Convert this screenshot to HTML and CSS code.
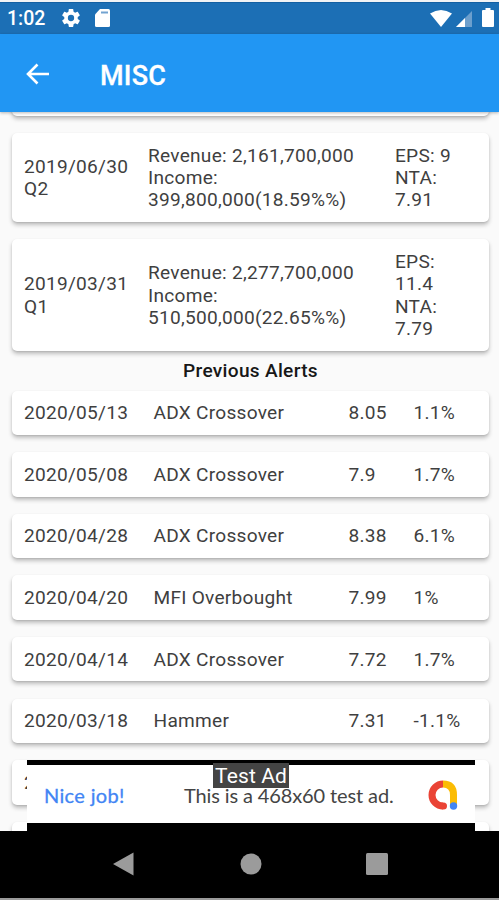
FILE: index.html
```html
<!DOCTYPE html>
<html lang="en">
<head>
<meta charset="utf-8">
<title>MISC</title>
<link rel="stylesheet" href="styles.css">
</head>
<body>
<div class="phone">
  <div class="status">
    <span class="time">1:02</span>
    <svg class="gear" viewBox="2 2 20 20"><path d="M19.43 12.98c.04-.32.07-.64.07-.98s-.03-.66-.07-.98l2.11-1.65c.19-.15.24-.42.12-.64l-2-3.46c-.12-.22-.39-.3-.61-.22l-2.49 1c-.52-.4-1.08-.73-1.69-.98l-.38-2.65C14.46 2.18 14.25 2 14 2h-4c-.25 0-.46.18-.49.42l-.38 2.65c-.61.25-1.17.59-1.69.98l-2.49-1c-.23-.09-.49 0-.61.22l-2 3.46c-.13.22-.07.49.12.64l2.11 1.65c-.04.32-.07.65-.07.98s.03.66.07.98l-2.11 1.65c-.19.15-.24.42-.12.64l2 3.46c.12.22.39.3.61.22l2.49-1c.52.4 1.08.73 1.69.98l.38 2.65c.03.24.24.42.49.42h4c.25 0 .46-.18.49-.42l.38-2.65c.61-.25 1.17-.59 1.69-.98l2.49 1c.23.09.49 0 .61-.22l2-3.46c.12-.22.07-.49-.12-.64zM12 15.5a3.5 3.5 0 1 1 0-7 3.500 3.500 0 0 1 0 7z"/></svg>
    <svg class="sd" viewBox="0 0 15 18"><path d="M5 0h8.500Q15 0 15 1.500v15Q15 18 13.500 18h-12Q0 18 0 16.500V5.500z"/><path class="slot" d="M6 2.500h7v2H6z"/></svg>
    <svg class="wifi" viewBox="0 0 22 17"><path d="M0 3.500Q11-3.500 22 3.500L11 17z"/></svg>
    <svg class="signal" viewBox="0 0 16 16"><path class="dim" d="M0 16L16 0v16z"/><path d="M0 16L9 7v9z"/></svg>
    <svg class="battery" viewBox="0 0 12 19"><path d="M3.500 0h5v2H11q1 0 1 1v15q0 1-1 1H1q-1 0-1-1V3q0-1 1-1h2.500z"/></svg>
  </div>
  <header class="appbar">
    <svg class="back" viewBox="0 0 24 22"><path d="M23 11H2M11.500 1.500L2 11l9.500 9.500"/></svg>
    <h1>MISC</h1>
  </header>
  <main class="content">
    <section class="results">
      <div class="card sliver"></div>
      <div class="card result"><div>2019/06/30<br>Q2</div><div>Revenue: 2,161,700,000<br>Income:<br>399,800,000(18.59%%)</div><div>EPS: 9<br>NTA:<br>7.91</div></div>
      <div class="card result"><div>2019/03/31<br>Q1</div><div>Revenue: 2,277,700,000<br>Income:<br>510,500,000(22.65%%)</div><div>EPS:<br>11.4<br>NTA:<br>7.79</div></div>
    </section>
    <h2>Previous Alerts</h2>
    <section class="alerts">
      <div class="card alert"><span>2020/05/13</span><span>ADX Crossover</span><span>8.05</span><span>1.1%</span></div>
      <div class="card alert"><span>2020/05/08</span><span>ADX Crossover</span><span>7.9</span><span>1.7%</span></div>
      <div class="card alert"><span>2020/04/28</span><span>ADX Crossover</span><span>8.38</span><span>6.1%</span></div>
      <div class="card alert"><span>2020/04/20</span><span>MFI Overbought</span><span>7.99</span><span>1%</span></div>
      <div class="card alert"><span>2020/04/14</span><span>ADX Crossover</span><span>7.72</span><span>1.7%</span></div>
      <div class="card alert"><span>2020/03/18</span><span>Hammer</span><span>7.31</span><span>-1.1%</span></div>
      <div class="card alert"><span>2</span></div>
      <div class="card alert"></div>
    </section>
    <aside class="ad">
      <span class="nice">Nice job!</span>
      <span class="copy">This is a 468x60 test ad.</span>
      <svg class="admob" viewBox="0 0 30 30"><path class="yellow" d="M15 4Q25.500 4 25.500 15v10"/><path class="red" d="M15 4a11 11 0 0 0 0 22"/><circle class="red-end" cx="15.500" cy="26" r="3.500"/><circle class="blue" cx="25.500" cy="26" r="3.700"/></svg>
      <span class="label">Test Ad</span>
    </aside>
  </main>
  <nav class="navbar">
    <svg viewBox="0 0 24 24"><path d="M1 12L21.500.5v23z"/></svg>
    <svg viewBox="0 0 24 24"><circle cx="12" cy="12" r="10.500"/></svg>
    <svg viewBox="0 0 24 24"><rect x="1" y="1" width="22" height="22" rx="1.500"/></svg>
  </nav>
</div>
</body>
</html>
```
FILE: styles.css
```css
* { box-sizing: border-box; }
body { margin: 0; font-family: Roboto, sans-serif; background: #fafafa; }
svg { display: block; flex: none; }
.phone { width: 499px; height: 900px; display: flex; flex-direction: column; overflow: hidden; border-top: 2px solid #f1f3f5; border-bottom: 2px solid #9b9b9b; }
.status { height: 32px; flex: none; display: flex; align-items: center; padding: 0 5px 0 7px; background: #1c6fb5; border-top: 1px solid #1360a3; color: #fff; }
.status svg { fill: #fff; }
.time { width: 55px; font-size: 19.500px; font-weight: 500; line-height: 22px; }
.gear { width: 18px; height: 18px; margin-top: -1px; }
.sd { width: 15px; height: 18px; margin: -1px 0 0 15px; }
.status .slot { fill: #72a3d0; }
.wifi { width: 22px; height: 17px; margin: -1px 0 0 auto; }
.signal { width: 16px; height: 16px; margin-left: 4px; }
.status .dim { fill: #6c9fcd; }
.battery { width: 12px; height: 19px; margin: -2px 0 0 10px; }
.appbar { position: relative; z-index: 1; height: 78px; flex: none; display: flex; align-items: center; padding-left: 26px; background: #2196f3; box-shadow: 0 1px 3px rgba(0,0,0,.28); color: #fff; }
.back { width: 24px; height: 22px; margin-top: 2px; fill: none; stroke: #fff; stroke-width: 2.600; }
h1 { margin: 6px 0 0 50px; font-size: 27px; font-weight: 500; line-height: 32px; letter-spacing: .2px; -webkit-text-stroke: .3px #fff; }
.content { position: relative; height: 719px; flex: none; overflow: hidden; padding: 0 10px 0 12px; background: #fafafa; color: #3f3f3f; font-size: 19.100px; line-height: 22.400px; letter-spacing: .26px; }
.results, .alerts { display: grid; gap: 17.200px; }
.card { background: #fff; border-radius: 5px; padding: 11.600px 12px 10.400px; box-shadow: 0 3px 4px rgba(0,0,0,.23), 0 1px 2px rgba(0,0,0,.1); }
.sliver { height: 20px; margin-top: -16.200px; padding: 0; }
.result { display: grid; grid-template-columns: 124px 247px 1fr; align-items: center; white-space: nowrap; }
h2 { margin: 9.400px 0 7.900px; font-size: 19.100px; font-weight: 500; line-height: 22.400px; letter-spacing: .3px; text-align: center; color: #171717; }
.alert { display: grid; grid-template-columns: 129.500px 195px 65px 1fr; height: 44.400px; white-space: nowrap; }
.ad { position: absolute; left: 27px; top: 648px; width: 448px; height: 71px; background: #fff; border-top: 5px solid #000; border-bottom: 8px solid #000; display: flex; align-items: center; padding: 1px 17px 0; font-family: Lato, sans-serif; font-size: 20px; line-height: 24px; white-space: nowrap; }
.nice { width: 140px; color: #4285f4; letter-spacing: .35px; -webkit-text-stroke: .3px #4285f4; }
.copy { color: #444; letter-spacing: -.12px; }
.admob { width: 30px; height: 30px; margin-left: auto; fill: none; stroke-width: 7; }
.yellow { stroke: #fbbc04; }
.red { stroke: #ea4335; }
.red-end { fill: #ea4335; stroke: none; }
.blue { fill: #4285f4; stroke: none; }
.label { position: absolute; left: 186px; top: -2px; width: 76px; height: 25px; background: #444; color: #fff; font-family: Roboto, sans-serif; font-size: 21px; line-height: 26px; text-align: center; letter-spacing: .1px; }
.navbar { flex: 1; display: flex; align-items: center; gap: 102.500px; padding: 0 0 1px 112px; background: #000; }
.navbar svg { width: 24px; height: 24px; fill: #9b9b9b; }
```
